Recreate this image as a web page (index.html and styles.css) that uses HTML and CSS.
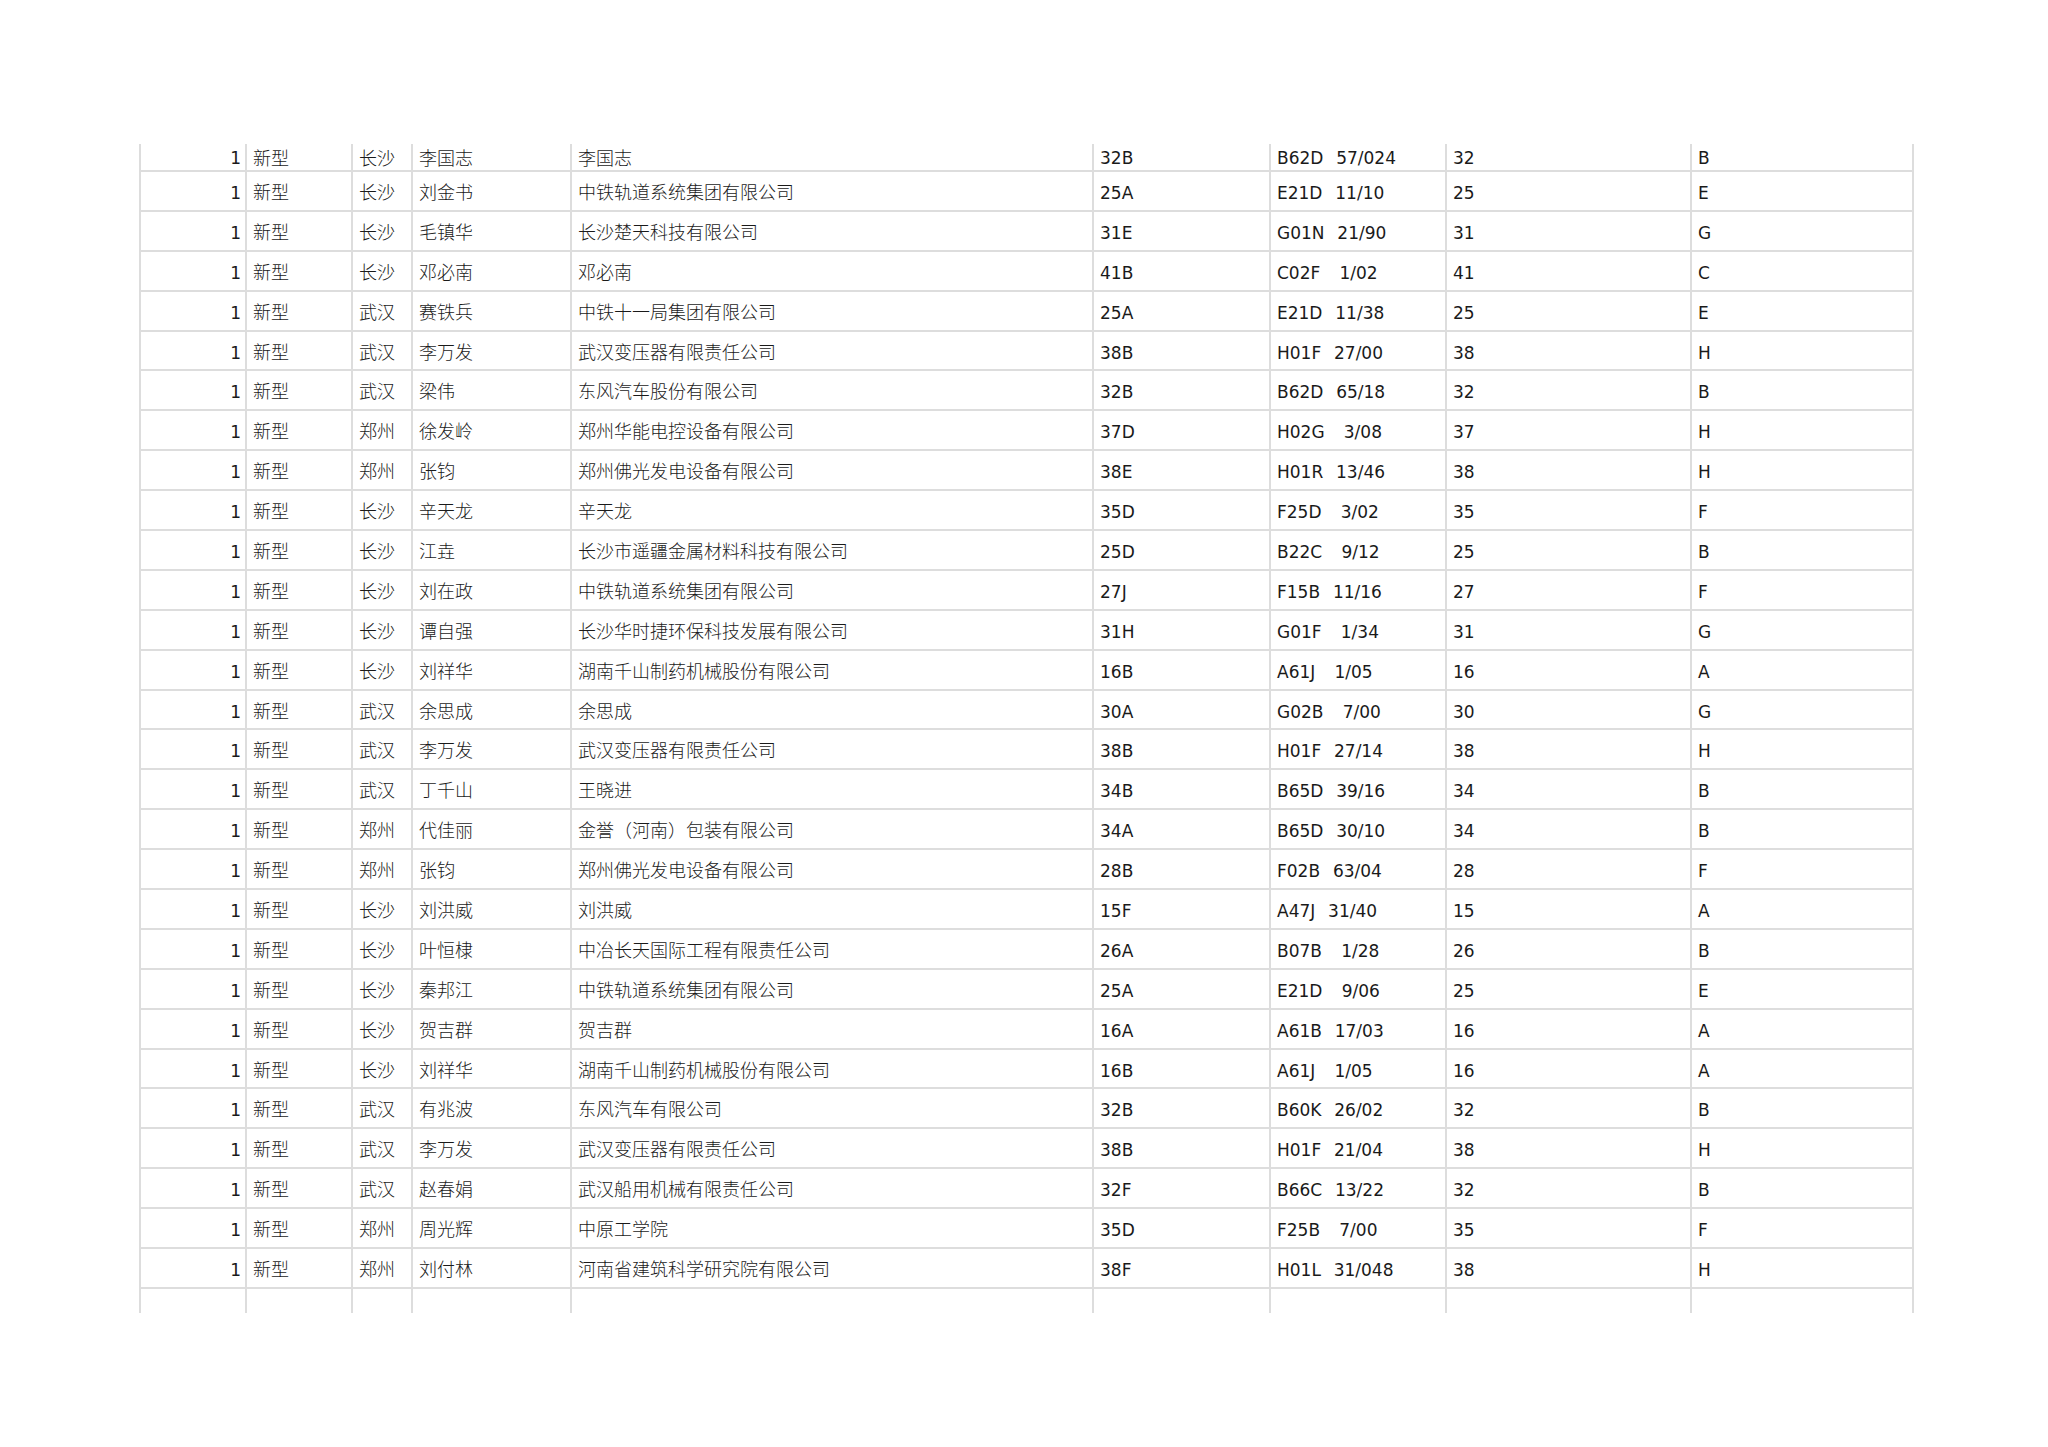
FILE: index.html
```html
<!DOCTYPE html>
<html lang="zh-CN">
<head>
<meta charset="utf-8">
<title>表格</title>
<link rel="stylesheet" href="styles.css">
</head>
<body>
<table class="sheet">
<colgroup>
<col class="c1"><col class="c2"><col class="c3"><col class="c4"><col class="c5"><col class="c6"><col class="c7"><col class="c8"><col class="c9">
</colgroup>
<tbody>
<tr class="first"><td class="num">1</td><td class="zh">新型</td><td class="zh">长沙</td><td class="zh">李国志</td><td class="zh">李国志</td><td>32B</td><td class="ipc">B62D&#160;&#160;57/024</td><td>32</td><td>B</td></tr>
<tr><td class="num">1</td><td class="zh">新型</td><td class="zh">长沙</td><td class="zh">刘金书</td><td class="zh">中铁轨道系统集团有限公司</td><td>25A</td><td class="ipc">E21D&#160;&#160;11/10</td><td>25</td><td>E</td></tr>
<tr><td class="num">1</td><td class="zh">新型</td><td class="zh">长沙</td><td class="zh">毛镇华</td><td class="zh">长沙楚天科技有限公司</td><td>31E</td><td class="ipc">G01N&#160;&#160;21/90</td><td>31</td><td>G</td></tr>
<tr><td class="num">1</td><td class="zh">新型</td><td class="zh">长沙</td><td class="zh">邓必南</td><td class="zh">邓必南</td><td>41B</td><td class="ipc">C02F&#160;&#160;&#160;1/02</td><td>41</td><td>C</td></tr>
<tr><td class="num">1</td><td class="zh">新型</td><td class="zh">武汉</td><td class="zh">赛铁兵</td><td class="zh">中铁十一局集团有限公司</td><td>25A</td><td class="ipc">E21D&#160;&#160;11/38</td><td>25</td><td>E</td></tr>
<tr><td class="num">1</td><td class="zh">新型</td><td class="zh">武汉</td><td class="zh">李万发</td><td class="zh">武汉变压器有限责任公司</td><td>38B</td><td class="ipc">H01F&#160;&#160;27/00</td><td>38</td><td>H</td></tr>
<tr><td class="num">1</td><td class="zh">新型</td><td class="zh">武汉</td><td class="zh">梁伟</td><td class="zh">东风汽车股份有限公司</td><td>32B</td><td class="ipc">B62D&#160;&#160;65/18</td><td>32</td><td>B</td></tr>
<tr><td class="num">1</td><td class="zh">新型</td><td class="zh">郑州</td><td class="zh">徐发岭</td><td class="zh">郑州华能电控设备有限公司</td><td>37D</td><td class="ipc">H02G&#160;&#160;&#160;3/08</td><td>37</td><td>H</td></tr>
<tr><td class="num">1</td><td class="zh">新型</td><td class="zh">郑州</td><td class="zh">张钧</td><td class="zh">郑州佛光发电设备有限公司</td><td>38E</td><td class="ipc">H01R&#160;&#160;13/46</td><td>38</td><td>H</td></tr>
<tr><td class="num">1</td><td class="zh">新型</td><td class="zh">长沙</td><td class="zh">辛天龙</td><td class="zh">辛天龙</td><td>35D</td><td class="ipc">F25D&#160;&#160;&#160;3/02</td><td>35</td><td>F</td></tr>
<tr><td class="num">1</td><td class="zh">新型</td><td class="zh">长沙</td><td class="zh">江垚</td><td class="zh">长沙市遥疆金属材料科技有限公司</td><td>25D</td><td class="ipc">B22C&#160;&#160;&#160;9/12</td><td>25</td><td>B</td></tr>
<tr><td class="num">1</td><td class="zh">新型</td><td class="zh">长沙</td><td class="zh">刘在政</td><td class="zh">中铁轨道系统集团有限公司</td><td>27J</td><td class="ipc">F15B&#160;&#160;11/16</td><td>27</td><td>F</td></tr>
<tr><td class="num">1</td><td class="zh">新型</td><td class="zh">长沙</td><td class="zh">谭自强</td><td class="zh">长沙华时捷环保科技发展有限公司</td><td>31H</td><td class="ipc">G01F&#160;&#160;&#160;1/34</td><td>31</td><td>G</td></tr>
<tr><td class="num">1</td><td class="zh">新型</td><td class="zh">长沙</td><td class="zh">刘祥华</td><td class="zh">湖南千山制药机械股份有限公司</td><td>16B</td><td class="ipc">A61J&#160;&#160;&#160;1/05</td><td>16</td><td>A</td></tr>
<tr><td class="num">1</td><td class="zh">新型</td><td class="zh">武汉</td><td class="zh">余思成</td><td class="zh">余思成</td><td>30A</td><td class="ipc">G02B&#160;&#160;&#160;7/00</td><td>30</td><td>G</td></tr>
<tr><td class="num">1</td><td class="zh">新型</td><td class="zh">武汉</td><td class="zh">李万发</td><td class="zh">武汉变压器有限责任公司</td><td>38B</td><td class="ipc">H01F&#160;&#160;27/14</td><td>38</td><td>H</td></tr>
<tr><td class="num">1</td><td class="zh">新型</td><td class="zh">武汉</td><td class="zh">丁千山</td><td class="zh">王晓进</td><td>34B</td><td class="ipc">B65D&#160;&#160;39/16</td><td>34</td><td>B</td></tr>
<tr><td class="num">1</td><td class="zh">新型</td><td class="zh">郑州</td><td class="zh">代佳丽</td><td class="zh">金誉（河南）包装有限公司</td><td>34A</td><td class="ipc">B65D&#160;&#160;30/10</td><td>34</td><td>B</td></tr>
<tr><td class="num">1</td><td class="zh">新型</td><td class="zh">郑州</td><td class="zh">张钧</td><td class="zh">郑州佛光发电设备有限公司</td><td>28B</td><td class="ipc">F02B&#160;&#160;63/04</td><td>28</td><td>F</td></tr>
<tr><td class="num">1</td><td class="zh">新型</td><td class="zh">长沙</td><td class="zh">刘洪威</td><td class="zh">刘洪威</td><td>15F</td><td class="ipc">A47J&#160;&#160;31/40</td><td>15</td><td>A</td></tr>
<tr><td class="num">1</td><td class="zh">新型</td><td class="zh">长沙</td><td class="zh">叶恒棣</td><td class="zh">中冶长天国际工程有限责任公司</td><td>26A</td><td class="ipc">B07B&#160;&#160;&#160;1/28</td><td>26</td><td>B</td></tr>
<tr><td class="num">1</td><td class="zh">新型</td><td class="zh">长沙</td><td class="zh">秦邦江</td><td class="zh">中铁轨道系统集团有限公司</td><td>25A</td><td class="ipc">E21D&#160;&#160;&#160;9/06</td><td>25</td><td>E</td></tr>
<tr><td class="num">1</td><td class="zh">新型</td><td class="zh">长沙</td><td class="zh">贺吉群</td><td class="zh">贺吉群</td><td>16A</td><td class="ipc">A61B&#160;&#160;17/03</td><td>16</td><td>A</td></tr>
<tr><td class="num">1</td><td class="zh">新型</td><td class="zh">长沙</td><td class="zh">刘祥华</td><td class="zh">湖南千山制药机械股份有限公司</td><td>16B</td><td class="ipc">A61J&#160;&#160;&#160;1/05</td><td>16</td><td>A</td></tr>
<tr><td class="num">1</td><td class="zh">新型</td><td class="zh">武汉</td><td class="zh">有兆波</td><td class="zh">东风汽车有限公司</td><td>32B</td><td class="ipc">B60K&#160;&#160;26/02</td><td>32</td><td>B</td></tr>
<tr><td class="num">1</td><td class="zh">新型</td><td class="zh">武汉</td><td class="zh">李万发</td><td class="zh">武汉变压器有限责任公司</td><td>38B</td><td class="ipc">H01F&#160;&#160;21/04</td><td>38</td><td>H</td></tr>
<tr><td class="num">1</td><td class="zh">新型</td><td class="zh">武汉</td><td class="zh">赵春娟</td><td class="zh">武汉船用机械有限责任公司</td><td>32F</td><td class="ipc">B66C&#160;&#160;13/22</td><td>32</td><td>B</td></tr>
<tr><td class="num">1</td><td class="zh">新型</td><td class="zh">郑州</td><td class="zh">周光辉</td><td class="zh">中原工学院</td><td>35D</td><td class="ipc">F25B&#160;&#160;&#160;7/00</td><td>35</td><td>F</td></tr>
<tr><td class="num">1</td><td class="zh">新型</td><td class="zh">郑州</td><td class="zh">刘付林</td><td class="zh">河南省建筑科学研究院有限公司</td><td>38F</td><td class="ipc">H01L&#160;&#160;31/048</td><td>38</td><td>H</td></tr>
<tr class="last"><td></td><td></td><td></td><td></td><td></td><td></td><td></td><td></td><td></td></tr>
</tbody>
</table>
</body>
</html>
```

FILE: styles.css
```css
html, body {
  margin: 0;
  padding: 0;
  background: #ffffff;
}

body {
  padding: 144px 0 0 139px;
  font-family: "DejaVu Sans", "Noto Sans CJK SC", sans-serif;
  color: #1a1a1a;
}

.sheet {
  border-collapse: collapse;
  table-layout: fixed;
  width: 1775px;
}

.c1 { width: 106px; }
.c2 { width: 106px; }
.c3 { width: 60px; }
.c4 { width: 159px; }
.c5 { width: 522px; }
.c6 { width: 177px; }
.c7 { width: 176px; }
.c8 { width: 245px; }
.c9 { width: 222px; }

.sheet tr {
  height: 39.9px;
}

.sheet td {
  border-left: 2px solid #dddddd;
  border-right: 2px solid #dddddd;
  border-bottom: 2px solid #dddddd;
  border-top: 0;
  padding: 11px 4px 0 6px;
  vertical-align: top;
  font-size: 17px;
  line-height: 20px;
  white-space: nowrap;
  overflow: hidden;
}

.sheet td.ipc {
  word-spacing: 1px;
}

.sheet td.num {
  text-align: right;
  padding-right: 4px;
}

.sheet td.zh {
  font-family: "Noto Sans CJK SC", sans-serif;
  font-size: 18px;
  font-weight: 300;
  padding-top: 9px;
}

.sheet tr.first {
  height: 27px;
}

.sheet tr.first td {
  padding-top: 4px;
}

.sheet tr.first td.zh {
  padding-top: 3px;
}

.sheet tr.last {
  height: 25px;
}

.sheet tr.last td {
  border-bottom: 0;
}
```
